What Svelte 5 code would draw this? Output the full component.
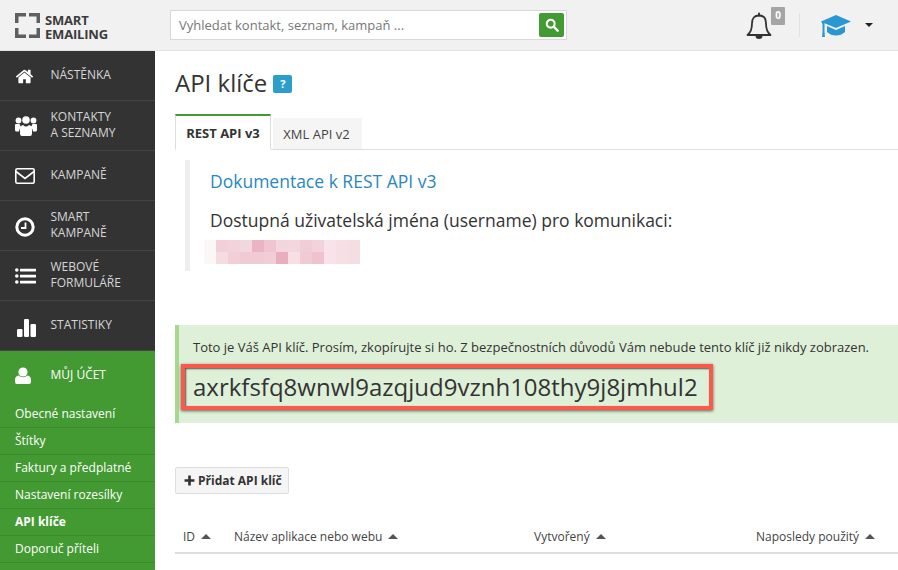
<script>
  const menu = [
    { id: 'home', label: ['Nástěnka'] },
    { id: 'users', label: ['Kontakty', 'a seznamy'] },
    { id: 'mail', label: ['Kampaně'] },
    { id: 'clock', label: ['Smart', 'kampaně'] },
    { id: 'list', label: ['Webové', 'formuláře'] },
    { id: 'chart', label: ['Statistiky'] }
  ];

  const submenu = [
    { label: 'Obecné nastavení' },
    { label: 'Štítky' },
    { label: 'Faktury a předplatné' },
    { label: 'Nastavení rozesílky' },
    { label: 'API klíče', active: true },
    { label: 'Doporuč příteli' }
  ];

  const columns = ['ID', 'Název aplikace nebo webu', 'Vytvořený', 'Naposledy použitý'];

  // rozmazané uživatelské jméno, dva řádky po 13 blocích
  const blur = [
    '#fbf7f7', '#f2d0d9', '#f2d3dc', '#f3d7df', '#eab4c3', '#efc5d1', '#f3d5de', '#f3d6df', '#f0cdd7', '#f2d3dc', '#f7e3e9', '#f6e0e6', '#f5dde4',
    '#fbf7f7', '#f5dbe2', '#f2ced9', '#f0cad5', '#f0cad5', '#f1cdd8', '#e8aebe', '#f6e0e6', '#f0cad5', '#eec2cf', '#f7e3e9', '#f6dfe5', '#f5dde4'
  ];
</script>

{#snippet icon(id)}
  {#if id === 'home'}
    <svg class="ico" viewBox="-186 -281 2263 2263" width="24" height="24"><path d="M1472 992v480q0 26-19 45t-45 19h-384v-384h-256v384h-384q-26 0-45-19t-19-45v-480q0-1 .5-3t.5-3l575-474 575 474q1 2 1 6zm223-69l-62 74q-8 9-21 11h-3q-13 0-21-7l-692-577-692 577q-12 8-24 7-13-2-21-11l-62-74q-8-10-7-23.500t11-21.500l719-599q32-26 76-26t76 26l244 204v-195q0-14 9-23t23-9h192q14 0 23 9t9 23v408l219 182q10 8 11 21.500t-7 23.500z"/></svg>
  {:else if id === 'users'}
    <svg class="ico" viewBox="0 0 24 24" width="24" height="24"><circle cx="13" cy="6" r="3.800"/><circle cx="5.500" cy="6.500" r="2.900"/><circle cx="20.500" cy="6.500" r="2.900"/><path d="M2 11q0-1 1-1h3.500q.5 2 2 3-2.500 1.500-2.500 4.500H3.500q-1.500 0-1.500-1.500zM24 11q0-1-1-1h-3.500q-.5 2-2 3 2.500 1.500 2.500 4.500h2.500q1.500 0 1.500-1.500z"/><path d="M7 15.500q0-4 3-4.500 1.500 1.500 3 1.500t3-1.500q3 .5 3 4.500v4q0 2.500-2 2.500H9q-2 0-2-2.500z"/></svg>
  {:else if id === 'mail'}
    <svg class="ico" viewBox="0 0 24 24" width="24" height="24"><rect x="2.800" y="4.800" width="18.400" height="14.400" rx="1.500" fill="none" stroke="currentColor" stroke-width="1.600"/><path d="M3 7.500l9 7 9-7" fill="none" stroke="currentColor" stroke-width="1.600"/></svg>
  {:else if id === 'clock'}
    <svg class="ico" viewBox="0 0 24 24" width="24" height="24"><circle cx="12" cy="13" r="8.200" fill="none" stroke="currentColor" stroke-width="3"/><path d="M12.500 8.500V14H8" fill="none" stroke="currentColor" stroke-width="1.800"/></svg>
  {:else if id === 'list'}
    <svg class="ico" viewBox="0 0 24 24" width="24" height="24"><circle cx="3.800" cy="6" r="1.800"/><circle cx="3.800" cy="12" r="1.800"/><circle cx="3.800" cy="18" r="1.800"/><rect x="7" y="4.700" width="16" height="2.700" rx=".4"/><rect x="7" y="10.700" width="16" height="2.700" rx=".4"/><rect x="7" y="16.700" width="16" height="2.700" rx=".4"/></svg>
  {:else if id === 'chart'}
    <svg class="ico" viewBox="0 0 24 24" width="24" height="24"><rect x="4" y="15" width="5.500" height="8" rx="1.200"/><rect x="11" y="5" width="5" height="18" rx="1.200"/><rect x="17.500" y="10" width="5.500" height="13" rx="1.200"/></svg>
  {:else if id === 'user'}
    <svg class="ico" viewBox="0 0 24 24" width="24" height="24"><circle cx="10" cy="8" r="4.600"/><path d="M2 16q0-4 3.500-4.500 2 1.800 4.500 1.800t4.500-1.800Q18 12 18 16v2q0 2-2 2H4q-2 0-2-2z"/></svg>
  {/if}
{/snippet}

<div class="page">
  <header class="topbar">
    <div class="logo">
      <svg viewBox="0 0 25 25" width="25" height="25">
        <path d="M0 10V0h11v3.500H3.500V10zM14 0h11v10h-3.500V3.500H14zM0 15h3.500v6.500H11V25H0zM21.500 15H25v10H14v-3.500h7.500z" fill="#5f5f5f" />
      </svg>
      <div class="logo-text">SMART<br />EMAILING</div>
    </div>
    <div class="search">
      <span class="search-text">Vyhledat kontakt, seznam, kampaň ...</span>
      <button class="search-btn" aria-label="Hledat">
        <svg viewBox="0 0 16 16" width="14" height="14"><circle cx="6.500" cy="6.500" r="4.500" fill="none" stroke="#fff" stroke-width="2.400" /><path d="M10 10l4.500 4.500" stroke="#fff" stroke-width="2.800" stroke-linecap="round" /></svg>
      </button>
    </div>
    <div class="top-right">
      <div class="bell">
        <svg viewBox="0 0 26 28" width="26" height="28"><path d="M13 3.500q-7 0-7 8 0 8-4.500 11.500h23q-4.500-3.500-4.500-11.500 0-8-7-8z" fill="none" stroke="#333" stroke-width="1.800" stroke-linejoin="round" /><path d="M13 1.500v2" stroke="#333" stroke-width="2" stroke-linecap="round" /><path d="M9.500 24a3.500 3 0 0 0 7 0z" fill="#333" /></svg>
        <span class="badge">0</span>
      </div>
      <div class="divider"></div>
      <svg class="cap" viewBox="0 0 32 24" width="32" height="24">
        <path d="M16 1L31 7.500 16 14 4 9v3L1 7.500z" fill="#2b97d0" />
        <path d="M7 12l9 4 9-4v6q-4 3.500-9 3.500T7 18z" fill="#2b97d0" />
        <path d="M3.500 9v11" stroke="#2b97d0" stroke-width="2" />
        <path d="M2.500 19h2l.5 4H2z" fill="#2b97d0" />
      </svg>
      <span class="caret"></span>
    </div>
  </header>

  <div class="body">
    <nav class="sidebar">
      {#each menu as item}
        <a class="menu-item" href="#top">
          <span class="menu-icon">{@render icon(item.id)}</span>
          <span class="menu-label">
            {#each item.label as line}
              <span>{line}</span>
            {/each}
          </span>
        </a>
      {/each}
      <div class="account">
        <a class="menu-item open" href="#top">
          <span class="menu-icon">{@render icon('user')}</span>
          <span class="menu-label"><span>Můj účet</span></span>
        </a>
        {#each submenu as sub}
          <a class="sub-item" class:active={sub.active} href="#top">{sub.label}</a>
        {/each}
      </div>
    </nav>

    <main class="content">
      <div class="title-row">
        <h1>API klíče</h1>
        <span class="help">?</span>
      </div>

      <div class="tabs">
        <span class="tab current">REST API v3</span>
        <span class="tab">XML API v2</span>
      </div>

      <blockquote class="doc">
        <a class="doc-link" href="#top">Dokumentace k REST API v3</a>
        <p>Dostupná uživatelská jména (username) pro komunikaci:</p>
        <div class="blurred">
          {#each blur as color}
            <i style="background: {color}"></i>
          {/each}
        </div>
      </blockquote>

      <div class="alert">
        <p>Toto je Váš API klíč. Prosím, zkopírujte si ho. Z bezpečnostních důvodů Vám nebude tento klíč již nikdy zobrazen.</p>
        <div class="key">axrkfsfq8wnwl9azqjud9vznh108thy9j8jmhul2</div>
        <span class="highlight"></span>
      </div>

      <button class="add-btn">
        <svg viewBox="0 0 10 10" width="11" height="11"><path d="M5 .5v9M.5 5h9" stroke="#333" stroke-width="2.400" /></svg>
        Přidat API klíč
      </button>

      <div class="table-head">
        {#each columns as col}
          <span class="col">{col}<span class="sort"></span></span>
        {/each}
      </div>
    </main>
  </div>
</div>

<style>
  :global(body) {
    margin: 0;
    background: #fff;
  }

  .page {
    width: 898px;
    height: 570px;
    overflow: hidden;
    font-family: 'Open Sans', sans-serif;
    color: #333;
  }

  .topbar {
    height: 50px;
    display: flex;
    align-items: center;
    background: #f1f1f1;
    border-bottom: 1px solid #e2e2e2;
  }

  .logo {
    width: 170px;
    box-sizing: border-box;
    padding: 1px 0 0 15px;
    display: flex;
    align-items: center;
    gap: 5px;
    flex: none;
  }

  .logo-text {
    margin-top: 2px;
    font-size: 13px;
    line-height: 14px;
    font-weight: 700;
    color: #3c3c3c;
    letter-spacing: -0.200px;
  }

  .search {
    width: 397px;
    height: 30px;
    box-sizing: border-box;
    border: 1px solid #d8d8d8;
    background: #fff;
    display: flex;
    align-items: center;
    justify-content: space-between;
    padding: 0 2px 0 8px;
  }

  .search-text {
    font-size: 13px;
    color: #777;
  }

  .search-btn {
    width: 25px;
    height: 24px;
    padding: 0;
    border: none;
    border-radius: 2px;
    background: #439a32;
    display: flex;
    align-items: center;
    justify-content: center;
  }

  .top-right {
    margin-left: auto;
    display: flex;
    align-items: center;
    padding-right: 25px;
  }

  .bell {
    position: relative;
    width: 26px;
    height: 28px;
    margin-top: 2px;
  }

  .badge {
    position: absolute;
    left: 25px;
    top: -5px;
    width: 14px;
    height: 18px;
    background: #a5a5a5;
    color: #fff;
    font-size: 10px;
    font-weight: 700;
    line-height: 16px;
    text-align: center;
    border-radius: 1px;
  }

  .divider {
    width: 1px;
    height: 24px;
    background: #e2e2e2;
    margin: 0 20px 0 27px;
  }

  .cap {
    margin-top: 1px;
  }

  .caret {
    margin-left: 13px;
    width: 0;
    height: 0;
    border-left: 4px solid transparent;
    border-right: 4px solid transparent;
    border-top: 4px solid #222;
  }

  .body {
    display: flex;
    height: 519px;
  }

  .sidebar {
    width: 155px;
    flex: none;
    background: #333;
  }

  .menu-item {
    height: 49px;
    box-sizing: content-box;
    display: flex;
    align-items: center;
    text-decoration: none;
    color: #d6d6d6;
    border-bottom: 1px solid #444;
    padding-left: 13px;
  }

  .menu-item .menu-icon {
    width: 37.500px;
    flex: none;
    display: flex;
    color: #fff;
  }

  .ico {
    fill: currentColor;
    display: block;
  }

  .menu-label {
    display: flex;
    flex-direction: column;
    font-size: 12px;
    line-height: 16px;
    text-transform: uppercase;
    margin-top: -2px;
  }

  .menu-item.open {
    color: #fff;
    border-bottom: none;
    height: 50px;
  }

  .account {
    background: #439a32;
    height: 219px;
  }

  .sub-item {
    display: block;
    height: 26px;
    line-height: 26px;
    padding-left: 15px;
    font-size: 12px;
    color: #fff;
    text-decoration: none;
    border-bottom: 1px solid #3b8a2c;
  }

  .sub-item.active {
    font-weight: 700;
  }

  .content {
    flex: 1;
    min-width: 0;
    padding-left: 20px;
  }

  .title-row {
    display: flex;
    align-items: center;
    gap: 6px;
    height: 63px;
  }

  h1 {
    margin: 0;
    font-size: 24px;
    font-weight: 400;
    color: #333;
  }

  .help {
    width: 19px;
    height: 18px;
    margin-top: 2px;
    background: #2b9fc9;
    color: #fff;
    font-size: 11px;
    font-weight: 700;
    line-height: 18px;
    text-align: center;
    border-radius: 2px;
  }

  .tabs {
    display: flex;
    align-items: flex-end;
    gap: 2px;
    height: 35px;
    border-bottom: 1px solid #ddd;
  }

  .tab {
    height: 32px;
    box-sizing: border-box;
    width: 89px;
    padding-right: 2px;
    text-align: center;
    font-size: 13px;
    line-height: 32px;
    background: #f5f5f5;
    color: #444;
    border-bottom: 1px solid #ddd;
    margin-bottom: -1px;
  }

  .tab.current {
    width: 96px;
    height: 36px;
    padding-right: 0;
    line-height: 34px;
    background: #fff;
    color: #333;
    font-weight: 700;
    border-top: 2px solid #439a32;
    border-left: 1px solid #ddd;
    border-right: 1px solid #ddd;
    border-bottom: 1px solid #fff;
  }

  .doc {
    margin: 10px 0 0 10px;
    height: 111px;
    box-sizing: border-box;
    border-left: 5px solid #eee;
    padding: 8px 0 0 20px;
    position: relative;
  }

  .doc-link {
    display: block;
    font-size: 17.500px;
    line-height: 26px;
    color: #2a87bf;
    text-decoration: none;
  }

  .doc p {
    margin: 13px 0 0;
    font-size: 17.500px;
    line-height: 26px;
    color: #333;
  }

  .blurred {
    position: absolute;
    left: 14px;
    top: 80px;
    display: grid;
    grid-template-columns: repeat(13, 12px);
    grid-auto-rows: 12px;
  }

  .blurred i {
    display: block;
  }

  .alert {
    position: relative;
    margin-top: 54px;
    height: 98px;
    box-sizing: border-box;
    background: #dff0d8;
    border-left: 4px solid #a6d98e;
    padding: 13px 0 0 14px;
  }

  .alert p {
    margin: 0;
    font-size: 13px;
    line-height: 18px;
    color: #333;
  }

  .key {
    margin-top: 12px;
    font-size: 24px;
    line-height: 38px;
    color: #333;
  }

  /* rámeček z anotace screenshotu, leží přes obsah */
  .highlight {
    position: absolute;
    left: 2px;
    top: 39px;
    width: 532px;
    height: 46px;
    box-sizing: border-box;
    border: 4px solid #fb5a4b;
    box-shadow: 0 1px 3px rgba(0, 0, 0, 0.6), inset 1px 1px 2px rgba(0, 0, 0, 0.65);
  }

  .add-btn {
    display: flex;
    align-items: center;
    gap: 3px;
    margin-top: 44px;
    width: 114px;
    height: 27px;
    padding: 0 0 0 8px;
    box-sizing: border-box;
    border: 1px solid #ddd;
    border-radius: 2px;
    background: #f5f5f5;
    font-family: inherit;
    font-size: 12px;
    font-weight: 700;
    color: #333;
  }

  .table-head {
    display: grid;
    grid-template-columns: 51px 300px 222px 1fr;
    margin-top: 34px;
    height: 24px;
    padding-left: 8px;
    border-bottom: 2px solid #ddd;
    font-size: 12px;
    line-height: 18px;
    color: #444;
  }

  .col {
    display: flex;
    align-items: center;
    height: 18px;
  }

  .sort {
    margin-left: 6px;
    margin-bottom: 2px;
    width: 0;
    height: 0;
    border-left: 5px solid transparent;
    border-right: 5px solid transparent;
    border-bottom: 5px solid #555;
  }
</style>
